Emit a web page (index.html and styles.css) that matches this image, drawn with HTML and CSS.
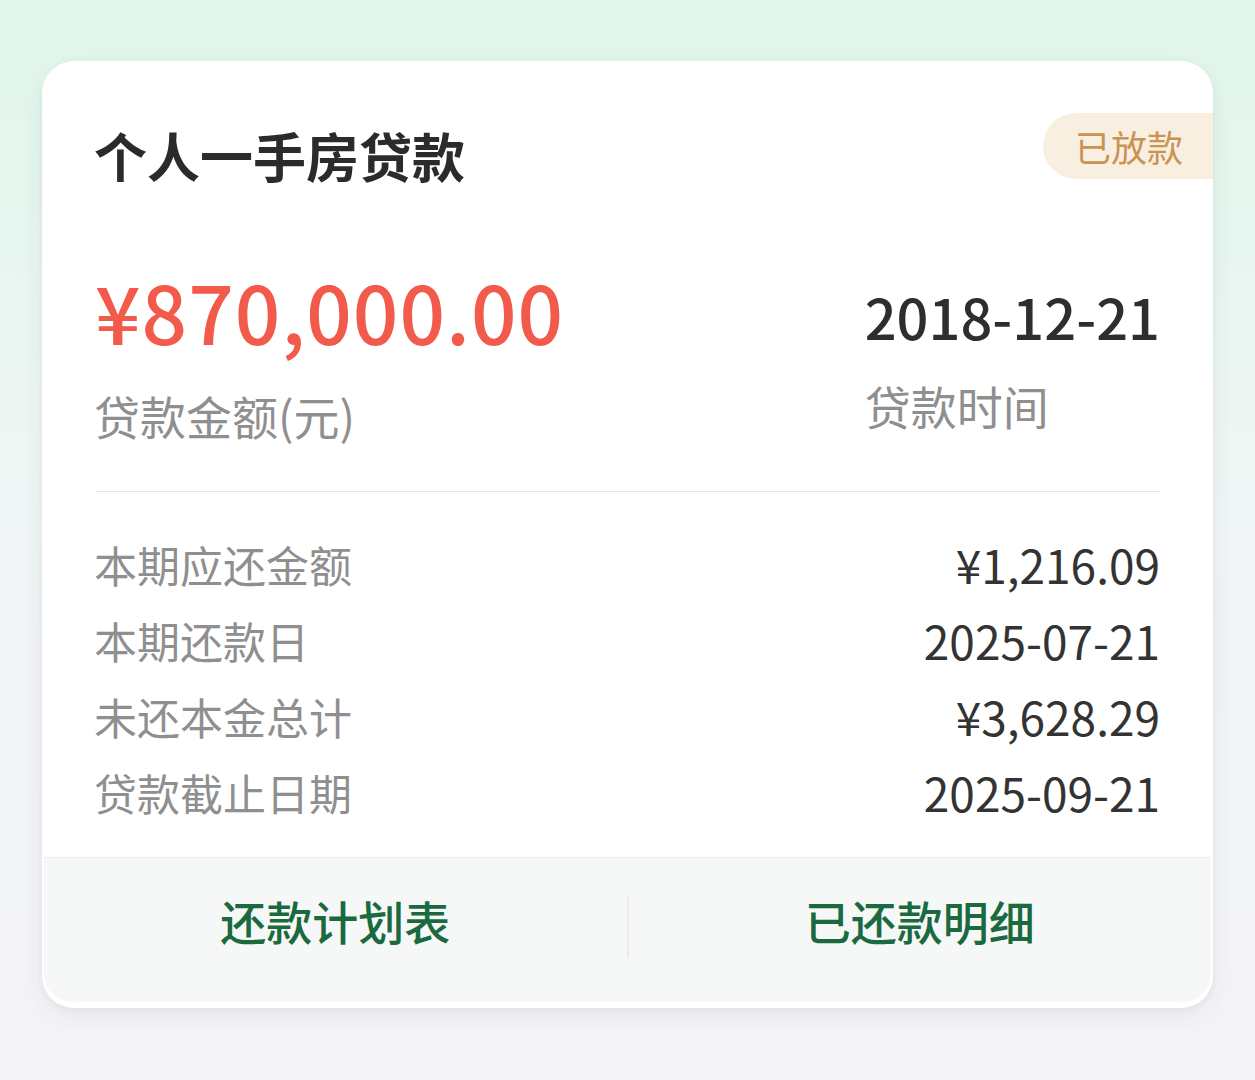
FILE: index.html
```html
<!DOCTYPE html>
<html lang="zh-CN">
<head>
<meta charset="utf-8">
<title>个人一手房贷款</title>
<link rel="stylesheet" href="styles.css">
</head>
<body>
<div class="page">
  <div class="card">
    <div class="header">
      <div class="title">个人一手房贷款</div>
      <div class="badge">已放款</div>
    </div>
    <div class="summary">
      <div class="col col-left">
        <div class="amount">¥870,000.00</div>
        <div class="sub sub-left">贷款金额(元)</div>
      </div>
      <div class="col col-right">
        <div class="date">2018-12-21</div>
        <div class="sub sub-right">贷款时间</div>
      </div>
    </div>
    <div class="divider"></div>
    <div class="rows">
      <div class="row"><span class="label">本期应还金额</span><span class="value">¥1,216.09</span></div>
      <div class="row"><span class="label">本期还款日</span><span class="value">2025-07-21</span></div>
      <div class="row"><span class="label">未还本金总计</span><span class="value">¥3,628.29</span></div>
      <div class="row"><span class="label">贷款截止日期</span><span class="value">2025-09-21</span></div>
    </div>
    <div class="footer">
      <div class="action">还款计划表</div>
      <div class="vline"></div>
      <div class="action">已还款明细</div>
    </div>
  </div>
</div>
</body>
</html>
```

FILE: styles.css
```css
* { box-sizing: border-box; }
html, body {
  margin: 0;
  padding: 0;
}
body {
  width: 1255px;
  height: 1080px;
  overflow: hidden;
  font-family: "Noto Sans CJK SC", "Noto Sans", sans-serif;
  background: linear-gradient(180deg, #e0f6ea 0px, #e6f6ef 200px, #eff6f4 450px, #f2f4f7 650px, #f4f4f8 1080px);
}
.page {
  padding: 61px 42px 0 42px;
}
.card {
  width: 1171px;
  height: 947px;
  background: #ffffff;
  border-radius: 32px;
  box-shadow: 0 8px 24px rgba(40, 50, 60, 0.07), 0 2px 6px rgba(40, 50, 60, 0.04);
  overflow: hidden;
  padding: 0 2px 6px 2px;
  display: flex;
  flex-direction: column;
}
.header {
  display: flex;
  align-items: flex-start;
  height: 124px;
}
.title {
  margin-top: 64px;
  margin-left: 50px;
  font-size: 53px;
  line-height: 60px;
  font-weight: 700;
  color: #2b2b2b;
}
.badge {
  margin-left: auto;
  margin-top: 52px;
  margin-right: -2px;
  height: 66px;
  line-height: 66px;
  padding: 0 30px 0 32px;
  border-radius: 33px 0 0 33px;
  background: #f9efe1;
  color: #c99452;
  font-size: 36px;
}
.summary {
  display: flex;
  justify-content: space-between;
  padding: 0 51px 0 51px;
  height: 306px;
}
.col { display: flex; flex-direction: column; }
.col-left { margin-top: 80px; }
.col-right { margin-top: 99px; }
.amount {
  font-size: 80px;
  line-height: 90px;
  font-weight: 500;
  color: #f25b4b;
  letter-spacing: 1px;
}
.date {
  font-size: 56px;
  line-height: 64px;
  font-weight: 500;
  color: #2e2e2e;
}
.sub {
  font-size: 46px;
  line-height: 56px;
  color: #8f8f8f;
}
.sub-left { margin-top: 32px; margin-left: -1px; }
.sub-right { margin-top: 29px; }
.divider {
  height: 1px;
  margin: 0 51px;
  background: #e6e6e6;
}
.rows {
  padding: 34px 51px 0 50px;
  height: 365px;
}
.row {
  display: flex;
  justify-content: space-between;
  align-items: center;
  height: 76px;
}
.label {
  font-size: 43px;
  color: #8f8f8f;
}
.value {
  font-size: 46px;
  color: #333333;
}
.footer {
  flex: 1;
  display: flex;
  align-items: flex-start;
  background: #f6f8f7;
  border-top: 1px solid #ebedec;
  border-radius: 0 0 28px 28px;
  padding-top: 34px;
}
.action {
  flex: 1;
  text-align: center;
  font-size: 46px;
  line-height: 56px;
  font-weight: 500;
  color: #1b6a3f;
}
.vline {
  width: 2px;
  height: 62px;
  margin-top: 4px;
  background: #ebebeb;
}
```
